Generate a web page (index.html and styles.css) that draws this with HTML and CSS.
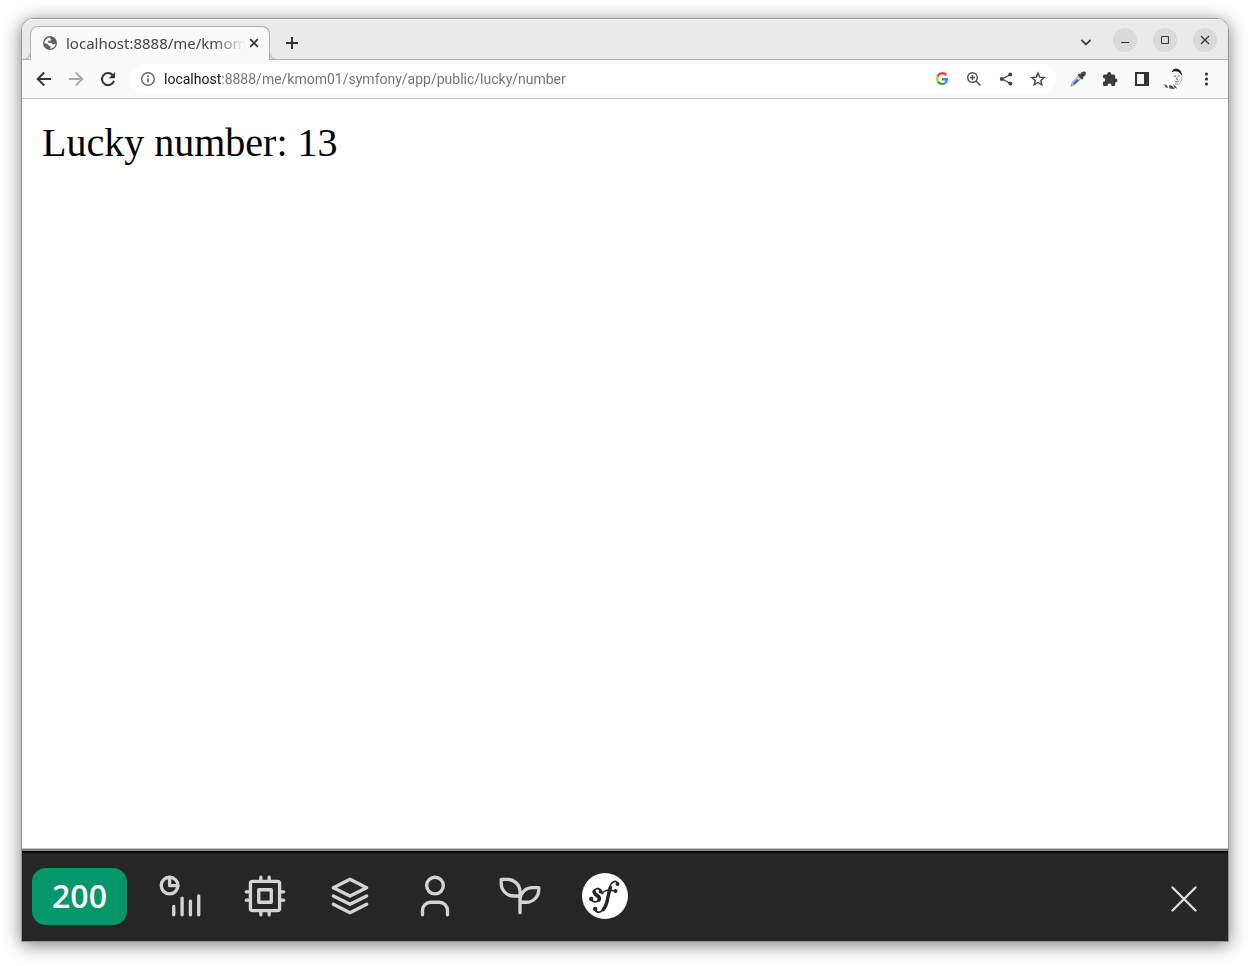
FILE: index.html
```html
<!DOCTYPE html>
<html lang="en">
<head>
<meta charset="utf-8">
<title>Lucky number</title>
<link rel="stylesheet" href="styles.css">
</head>
<body>
<div class="window">
  <header class="tab-strip">
    <div class="tab">
      <svg class="icon" viewBox="0 0 16 16"><circle cx="8" cy="8" r="7" fill="#5f6368"/><path d="M8 2.6 10 4 8.6 5.8H6.4L5.6 7.4 9 8l2 1.4 2.6-.6A6 6 0 0 1 8.2 13.8L8.4 11 6.6 10.6 5.6 9 2.4 8.2A5.6 5.6 0 0 1 8 2.6z" fill="#fafafa"/><path d="M8.4 2.4 12 4.2 13.4 7.4 11.4 7.8 9.6 6.6 10.6 5 8.2 4z" fill="#5f6368"/></svg>
      <span class="tab-title">localhost:8888/me/kmom</span>
      <button class="tab-close" aria-label="Close tab"><svg class="icon" viewBox="0 0 16 16"><path d="m4.2 4.2 7.6 7.6m0-7.6-7.6 7.6" stroke="#333" stroke-width="1.8"/></svg></button>
    </div>
    <button class="new-tab" aria-label="New tab"><svg class="icon" viewBox="0 0 16 16"><path d="M8 2v12M2 8h12" stroke="#333" stroke-width="2"/></svg></button>
    <div class="window-controls">
      <button class="search-tabs" aria-label="Search tabs"><svg class="icon" viewBox="0 0 16 16"><path d="m4.500 8 4.500 4.500L13.500 8" fill="none" stroke="#444" stroke-width="1.8"/></svg></button>
      <button class="round" aria-label="Minimize"><svg class="icon" viewBox="0 0 16 16"><path d="M4 10.500h8" stroke="#333"/></svg></button>
      <button class="round" aria-label="Maximize"><svg class="icon" viewBox="0 0 16 16"><path d="M4.500 4.500h7v7h-7z" fill="none" stroke="#333"/></svg></button>
      <button class="round" aria-label="Close window"><svg class="icon" viewBox="0 0 16 16"><path d="m4 4 8 8m0-8-8 8" stroke="#333" stroke-width="1.2"/></svg></button>
    </div>
  </header>

  <nav class="toolbar" aria-label="Browser toolbar">
    <button class="tool" aria-label="Back"><svg class="icon" viewBox="0 0 16 16"><path d="M15 8H2M8.200 1.500 1.700 8l6.500 6.500" fill="none" stroke="#333" stroke-width="1.900"/></svg></button>
    <button class="tool" aria-label="Forward"><svg class="icon" viewBox="0 0 16 16"><path d="M1 8h13M7.800 1.500 14.300 8l-6.500 6.500" fill="none" stroke="#aaa" stroke-width="1.900"/></svg></button>
    <button class="tool" aria-label="Reload"><svg class="icon" viewBox="0 0 16 16"><path d="M13.900 9.800A6.100 6.100 0 1 1 12.600 4" fill="none" stroke="#333" stroke-width="2"/><path d="M15 1v6.200H8.800z" fill="#333"/></svg></button>
    <form class="omnibox">
      <svg class="icon" viewBox="0 0 16 16"><circle cx="8" cy="8" r="6.300" fill="none" stroke="#5f6368" stroke-width="1.400"/><path d="M8 4.300v1.600M8 7.200v4.400" stroke="#5f6368" stroke-width="1.600"/></svg>
      <input class="address" type="text" aria-label="Address" value="localhost:8888/me/kmom01/symfony/app/public/lucky/number">
      <button type="button" class="tool" aria-label="Google"><svg class="icon" viewBox="0 0 16 16"><g fill="none" stroke-width="2.400"><path d="M12.200 4.100A5 5 0 0 0 3.700 5.600" stroke="#ea4335"/><path d="M3.700 5.600a5 5 0 0 0 0 4.800" stroke="#fbbc05"/><path d="M3.700 10.400a5 5 0 0 0 7.500 1.500" stroke="#34a853"/><path d="M11.200 11.900A5 5 0 0 0 12.900 8.200H8" stroke="#4285f4"/></g></svg></button>
      <button type="button" class="tool" aria-label="Zoom"><svg class="icon" viewBox="0 0 16 16"><path d="M6.500 4v5M4 6.500h5M10 10l4.500 4.500" stroke="#505050" stroke-width="1.500"/><circle cx="6.500" cy="6.500" r="4.800" fill="none" stroke="#505050" stroke-width="1.400"/></svg></button>
      <button type="button" class="tool" aria-label="Share"><svg class="icon" viewBox="0 0 16 16"><path d="M12.500 3.500 4 8l8.500 4.500" fill="none" stroke="#444" stroke-width="1.300"/><g fill="#444"><circle cx="12.300" cy="3.500" r="2"/><circle cx="3.800" cy="8" r="2"/><circle cx="12.300" cy="12.500" r="2"/></g></svg></button>
      <button type="button" class="tool" aria-label="Bookmark"><svg class="icon" viewBox="0 0 16 16"><path d="m8 2 1.700 4.100 4.500.4-3.400 2.900 1 4.400L8 11.500l-3.800 2.300 1-4.400-3.400-2.900 4.500-.4z" fill="none" stroke="#444" stroke-width="1.400"/></svg></button>
    </form>
    <button class="tool" aria-label="Color picker"><svg class="icon" viewBox="0 0 16 16"><path d="m9.300 4 2.700 2.700-7.400 7L.8 15.300l1.500-4z" fill="#c9ced8" stroke="#8b8f98" stroke-width=".8"/><path d="m6.800 8 2 1.600-4.400 4-1.900-.3z" fill="#3159dc"/><path d="m7.500 4 1.600-1.600 1.200.6C11.300.9 13.600-.2 15.200.8c1.500 1.700.2 4-2.100 5l.5 1.300L12 8.700z" fill="#444"/></svg></button>
    <button class="tool" aria-label="Extensions"><svg class="icon" viewBox="0 0 16 16"><path d="M1 5q0-1.500 1.500-1.500H5.200V3a2 2 0 0 1 4 0v.5h2.600q1.400 0 1.400 1.500v2.500h.2a2 2 0 0 1 0 4h-.2v2q0 1.500-1.400 1.500H9.500V14.500a2 2 0 0 0-4 0V15h-3Q1 15 1 13.500v-2.800h.5a1.800 1.800 0 0 0 0-3.600H1z" fill="#3c3c3c"/></svg></button>
    <button class="tool" aria-label="Side panel"><svg class="icon" viewBox="0 0 16 16"><path d="M1 1h14v14H1zM3 3v10h7V3z" fill="#333" fill-rule="evenodd"/></svg></button>
    <button class="tool" aria-label="Profile"><svg class="avatar" viewBox="0 0 22 22"><path d="M9 3.200Q11-.5 15 1q4 1.800 4 6.500-1.300-.8-2-2.500Q15 3.300 13 3.300 11 3 9 4.300z" fill="#222"/><path d="M19 7.500q.8 4.500-2.300 8-2.800 2.200-5-.4" fill="none" stroke="#aaa"/><path d="m11 8.500 2-.6m2.200.2 2-.2M14.200 9l-.6 2.300 1.300.4M12.200 13.600q2 1.200 4-.8" fill="none" stroke="#666"/><path d="m.5 16 3.500 1.600L5 20l-2-.6zM6 17.500q3-1 5.500 3.500l-5-.5zM10 16l4.500 4.500-3-.7z" fill="#444"/></svg></button>
    <button class="tool" aria-label="Menu"><svg class="icon" viewBox="0 0 16 16"><g fill="#333"><circle cx="8.500" cy="3" r="1.600"/><circle cx="8.500" cy="8" r="1.600"/><circle cx="8.500" cy="13" r="1.600"/></g></svg></button>
  </nav>

  <main class="page">Lucky number: 13</main>

  <footer class="debug-bar">
    <button class="status">200</button>
    <button class="panel" aria-label="Performance"><svg viewBox="0 0 24 24"><circle cx="7" cy="7" r="4"/><path d="M7 3v4h4M9 17v4M13 13v8M17 14.500V21M21 12v9"/></svg></button>
    <button class="panel" aria-label="Memory"><svg viewBox="0 0 24 24"><rect x="5" y="5" width="14" height="14" rx="1"/><path d="M9 9h6v6H9zM3 10h2M3 14h2M10 3v2M14 3v2M21 10h-2M21 14h-2M14 21v-2M10 21v-2"/></svg></button>
    <button class="panel" aria-label="Cache"><svg viewBox="0 0 24 24"><path d="M12 4 4 8l8 4 8-4zM4 12l8 4 8-4M4 16l8 4 8-4"/></svg></button>
    <button class="panel" aria-label="User"><svg viewBox="0 0 24 24"><circle cx="12" cy="7" r="4"/><path d="M6 21v-2a4 4 0 0 1 4-4h4a4 4 0 0 1 4 4v2"/></svg></button>
    <button class="panel" aria-label="Twig"><svg viewBox="0 0 24 24"><path d="M12 10a6 6 0 0 0-6-6H3v2a6 6 0 0 0 6 6h3M12 14a6 6 0 0 1 6-6h3v1a6 6 0 0 1-6 6h-3M12 20V10"/></svg></button>
    <button class="panel" aria-label="Symfony"><svg class="brand" viewBox="0 0 46 46"><circle class="disc" cx="23" cy="23" r="23"/><path class="thick" d="M12.200 18.500q0 2 3 4 3.200 2.200 1.800 4.500"/><path class="thin" d="M19 18q-1-2.800-4-2.300-4 1-3.500 4 .5 2 3.500 3.800 3.500 2.500.5 4.800-4.500 1.700-6.500-2"/><path class="thick" d="M28.500 14.500q-2 6-3.200 13-1.600 6.500-4.100 9"/><path class="thin" d="M35.500 10q-1-2.300-4-1.300-3 1.500-4.600 8.300L25 28q-2 9-7 11-4 .8-5-2.500M20 20.500q2.500-3 6-3.500 4.500.5 7.500 1"/><circle class="dot" cx="18.600" cy="18.500" r="1.900"/><circle class="dot" cx="9.200" cy="26" r="2.200"/><circle class="dot" cx="35.500" cy="11" r="2"/><circle class="dot" cx="13.200" cy="36" r="2.200"/><circle class="dot" cx="33.500" cy="18" r="2"/></svg></button>
    <button class="dismiss" aria-label="Close toolbar"><svg viewBox="0 0 26 26"><path d="m1.500 1.500 23 23m0-23-23 23"/></svg></button>
  </footer>
</div>
</body>
</html>
```
FILE: styles.css
```css
* { box-sizing: border-box; }

body {
  margin: 0;
  min-height: 100vh;
  padding: 18px 21px 24px;
  display: flex;
  background: #fff;
}

button {
  display: flex;
  align-items: center;
  justify-content: center;
  flex: none;
  padding: 0;
  border: 0;
  background: none;
}

.icon { display: block; flex: none; width: 16px; height: 16px; }

.window {
  flex: 1;
  min-width: 0;
  display: flex;
  flex-direction: column;
  overflow: hidden;
  border: 1px solid #929292;
  border-radius: 12px 12px 0 0;
  box-shadow: 0 3px 18px rgba(0, 0, 0, .5);
  font-family: "Noto Sans", sans-serif;
}

.tab-strip {
  display: flex;
  align-items: center;
  height: 41px;
  padding: 0 11px 0 8px;
  background: #eaeaea;
  box-shadow: inset 0 1px #fafafa, inset 0 -1px #b0b0b0;
}

.tab {
  position: relative;
  align-self: flex-end;
  display: flex;
  align-items: center;
  width: 240px;
  height: 34px;
  padding: 0 7px 2px 11px;
  border: 1px solid #b0b0b0;
  border-bottom: 0;
  border-radius: 8px 8px 0 0;
  background: #fafafa;
}

.tab::before,
.tab::after {
  content: "";
  position: absolute;
  bottom: 0;
  width: 9px;
  height: 9px;
  border: 0 solid #b0b0b0;
  border-bottom-width: 1px;
}

.tab::before {
  right: 100%;
  border-right-width: 1px;
  border-bottom-right-radius: 8px;
  background: #eaeaea;
}

.tab::after {
  left: 100%;
  border-left-width: 1px;
  border-bottom-left-radius: 8px;
  background: #eaeaea;
}

.tab-title {
  flex: 1;
  overflow: hidden;
  margin-left: 8px;
  color: #444;
  font-size: 15px;
  line-height: 20px;
  white-space: nowrap;
  mask-image: linear-gradient(to right, #000 82%, transparent);
}

.tab-close { width: 16px; height: 16px; }
.new-tab { width: 28px; height: 28px; margin: 6px 0 0 8px; }

.window-controls {
  display: flex;
  align-items: center;
  gap: 16px;
  margin-left: auto;
}

.search-tabs,
.round { width: 24px; height: 24px; }

.round { border-radius: 50%; background: #dadada; }

.toolbar {
  display: flex;
  align-items: center;
  height: 39px;
  padding: 0 6px;
  border-bottom: 1px solid #c6c6c6;
  background: #fafafa;
}

.tool { width: 32px; height: 28px; }

.avatar { display: block; width: 22px; height: 22px; }

.omnibox {
  flex: 1;
  min-width: 0;
  display: flex;
  align-items: center;
  height: 30px;
  margin: 0 6px;
  padding: 0 2px 0 10px;
  border-radius: 15px;
  background: #fff;
}

/* The host is darker than the rest of the URL. */
.address {
  flex: 1;
  min-width: 0;
  height: 28px;
  margin: 0 0 0 8px;
  padding: 0;
  border: 0;
  outline: 0;
  color: #707070;
  background: linear-gradient(to right, #111 57px, #707070 57px);
  background-clip: text;
  -webkit-text-fill-color: transparent;
  font: 14px Roboto, sans-serif;
}

.page {
  flex: 1;
  padding: 20px;
  background: #fff;
  color: #000;
  font: 40px/48px "Liberation Serif", serif;
}

.debug-bar {
  display: flex;
  align-items: center;
  height: 93px;
  padding: 3px 26px 0 10px;
  background: linear-gradient(#bbb 1px, #808080 1px, #808080 3px, #000 3px, #000 5px, #262626 5px);
}

.status {
  width: 95px;
  height: 57px;
  margin-right: 10px;
  border-radius: 14px;
  background: #059669;
  color: #fff;
  font: 600 32px/40px "Open Sans", sans-serif;
}

.panel { width: 85px; height: 60px; }

.panel svg {
  width: 50px;
  height: 50px;
  fill: none;
  stroke: #d4d4d4;
  stroke-width: 1.6;
  stroke-linecap: round;
  stroke-linejoin: round;
}

.panel .brand { width: 46px; height: 46px; stroke: #262626; }
.brand .disc { fill: #fff; stroke: none; }
.brand .dot { fill: #262626; stroke: none; }
.brand .thick { stroke-width: 3.4; }
.brand .thin { stroke-width: 1.7; }

.dismiss { width: 36px; height: 36px; margin: 6px 0 0 auto; }

.dismiss svg {
  width: 26px;
  height: 26px;
  stroke: #ddd;
  stroke-width: 2.4;
  stroke-linecap: round;
}
```
